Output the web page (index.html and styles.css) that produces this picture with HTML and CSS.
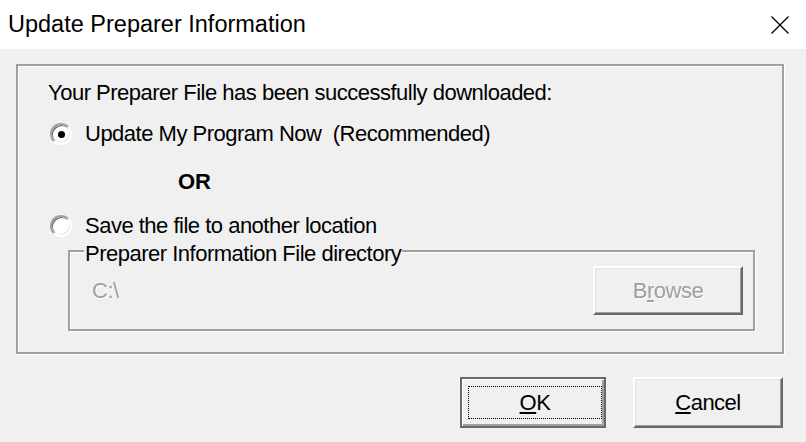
FILE: index.html
```html
<!DOCTYPE html>
<html lang="en">
<head>
    <meta charset="UTF-8">
    <title>Update Preparer Information</title>
    <link rel="stylesheet" href="styles.css">
</head>

<body>
    <div class="dialog">
        <!-- 標題列 -->
        <div class="titlebar">
            <span class="title">Update Preparer Information</span>
            <svg class="close" width="20" height="18" viewBox="0 0 20 18">
                <path d="M1.5 0.5 L18.5 17.5 M18.5 0.5 L1.5 17.5" stroke="#000" stroke-width="1.3" fill="none"/>
            </svg>
        </div>

        <div class="client">
            <!-- 主要選項 -->
            <div class="group">
                <p class="intro">Your Preparer File has been successfully downloaded:</p>

                <label class="option first">
                    <span class="radio checked"></span>
                    <span>Update My Program Now&nbsp; (Recommended)</span>
                </label>

                <p class="or">OR</p>

                <label class="option second">
                    <span class="radio"></span>
                    <span>Save the file to another location</span>
                </label>

                <!-- 目錄選擇 -->
                <div class="dirbox">
                    <span class="legend">Preparer Information File directory</span>
                    <div class="dirrow">
                        <span class="path">C:\</span>
                        <button class="btn browse" disabled>B<u>r</u>owse</button>
                    </div>
                </div>
            </div>

            <!-- 按鈕 -->
            <div class="actions">
                <button class="btn default"><span class="focus"><u>O</u>K</span></button>
                <button class="btn cancel"><u>C</u>ancel</button>
            </div>
        </div>
    </div>
</body>

</html>
```

FILE: styles.css
```css
/* 基本頁面風格 */
body {
    margin: 0;
    padding: 0;
    background-color: #f0f0f0;
    font-family: "Liberation Sans", Arial, sans-serif;
    color: #000;
}

.dialog {
    width: 806px;
    height: 442px;
    overflow: hidden;
}

/* 標題列 */
.titlebar {
    height: 49px;
    background-color: #fff;
    display: flex;
    align-items: center;
    justify-content: space-between;
    padding: 0 16px 0 8px;
    box-sizing: border-box;
}

.title {
    font-size: 23.5px;
}

.close {
    display: block;
    margin-top: 1px;
}

/* 內容區 */
.client {
    padding: 15px 22px 0 16px;
    font-size: 22px;
    letter-spacing: -0.5px;
    line-height: 24px;
}

.group {
    border: 2px solid #a0a0a0;
    box-shadow: inset 1px 1px 0 #fff, 1px 1px 0 #fff;
    padding: 15px 0 21px;
}

.intro {
    margin: 0;
    padding-left: 30px;
}

.option {
    display: flex;
    align-items: center;
    gap: 13px;
    height: 24px;
    padding-left: 32px;
}

.option.first {
    margin-top: 17px;
}

.option.second {
    margin-top: 20px;
}

.radio {
    width: 22px;
    height: 22px;
    box-sizing: border-box;
    border-radius: 50%;
    border: 2px solid;
    border-color: #a0a0a0 #fff #fff #a0a0a0;
    background-color: #fff;
    box-shadow: inset 1px 1px 0 #696969, inset -1px -1px 0 #e3e3e3;
    display: flex;
    align-items: center;
    justify-content: center;
}

.radio.checked::after {
    content: "";
    width: 7px;
    height: 7px;
    border-radius: 50%;
    background-color: #000;
}

.or {
    margin: 24px 0 0;
    padding-left: 160px;
    font-weight: bold;
    letter-spacing: 0;
}

/* 目錄群組 */
.dirbox {
    margin: 12px 27px 0 50px;
    border: 2px solid #a0a0a0;
    box-shadow: inset 1px 1px 0 #fff, 1px 1px 0 #fff;
}

.legend {
    display: block;
    width: fit-content;
    margin: -10px 0 0 14px;
    padding: 0 1px;
    background-color: #f0f0f0;
}

.dirrow {
    display: flex;
    align-items: center;
    justify-content: space-between;
    padding: 0 10px 14px 22px;
}

.path {
    color: #a0a0a0;
    text-shadow: 1px 1px 0 #fff;
}

/* 按鈕 */
.btn {
    font-family: inherit;
    font-size: 22px;
    letter-spacing: -0.5px;
    line-height: 24px;
    color: #000;
    width: 150px;
    height: 49px;
    box-sizing: border-box;
    background-color: #f0f0f0;
    border: 2px solid;
    border-color: #fff #696969 #696969 #fff;
    box-shadow: inset -1px -1px 0 #a0a0a0, inset 1px 1px 0 #e3e3e3;
    padding: 0;
}

.btn:disabled {
    color: #a0a0a0;
    text-shadow: 1px 1px 0 #fff;
}

.actions {
    display: flex;
    justify-content: flex-end;
    gap: 27px;
    margin: 23px 1px 0 0;
}

.btn.default {
    width: 146px;
    height: 51px;
    border: 2px solid #696969;
    box-shadow: inset 1px 1px 0 #fff, inset -2px -2px 0 #a0a0a0;
    padding: 7px 2px 7px 6px;
    display: flex;
}

.focus {
    flex: 1;
    border: 1px dotted #000;
    display: flex;
    align-items: center;
    justify-content: center;
}

.btn.cancel {
    height: 51px;
}
```
